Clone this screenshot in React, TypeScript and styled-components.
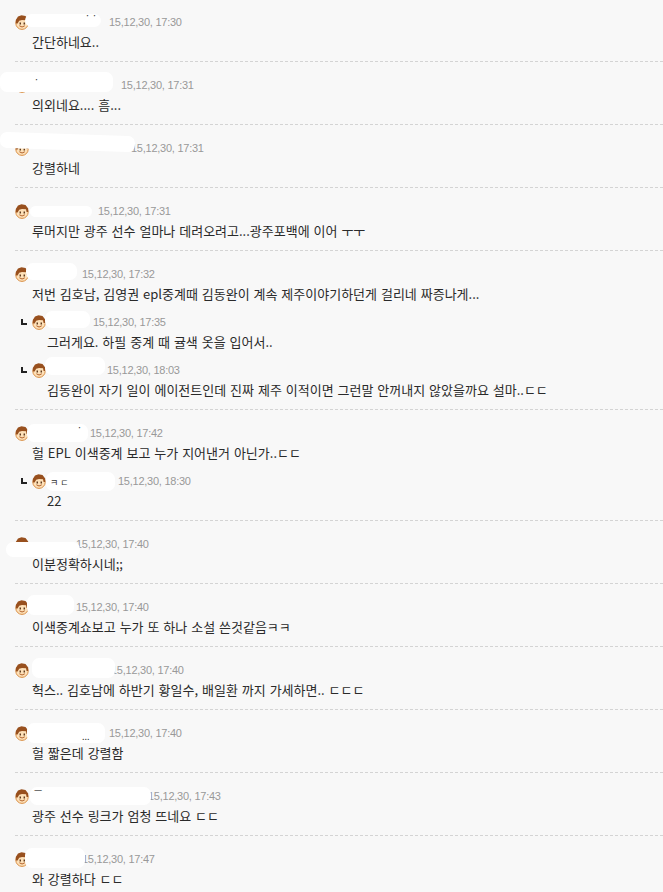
import styled, { createGlobalStyle } from "styled-components";

const GlobalStyle = createGlobalStyle`
  html, body {
    margin: 0;
    padding: 0;
    background: #f8f8f8;
  }
`;

const Page = styled.div`
  width: 663px;
  height: 892px;
  overflow: hidden;
  padding-top: 14px;
  box-sizing: border-box;
  background: #f8f8f8;
  font-family: "Noto Sans CJK KR", "Liberation Sans", sans-serif;
`;

const Thread = styled.div`
  margin-left: 15px;
  padding-bottom: 9px;
  margin-bottom: 15px;
  border-bottom: 1px dashed #d4d4d4;
`;

const Comment = styled.div<{ $reply?: boolean }>`
  height: 38px;
  margin-left: ${({ $reply }) => ($reply ? "6px" : "0")};
  margin-top: ${({ $reply }) => ($reply ? "10px" : "0")};
`;

const Header = styled.div`
  display: flex;
  align-items: center;
  height: 16px;
`;

const Mask = styled.div<{ $width: number; $back: number; $height: number; $shift: number; $tilt: number }>`
  position: relative;
  z-index: 1;
  flex: none;
  width: ${({ $width }) => $width}px;
  height: ${({ $height }) => $height}px;
  margin-left: ${({ $back }) => -$back}px;
  background: #fff;
  border-radius: 7px;
  transform: translateY(${({ $shift }) => $shift}px) rotate(${({ $tilt }) => $tilt}deg);
`;

const Residue = styled.span<{ $left: number; $top: number }>`
  position: absolute;
  left: ${({ $left }) => $left}px;
  top: ${({ $top }) => $top}px;
  font-size: 9px;
  line-height: 10px;
  color: #333;
  white-space: nowrap;
`;

const Stamp = styled.span<{ $gap: number }>`
  margin-left: ${({ $gap }) => $gap}px;
  font-family: "Liberation Sans", sans-serif;
  font-size: 11px;
  letter-spacing: -0.25px;
  color: #999;
  white-space: nowrap;
`;

const Body = styled.div<{ $reply?: boolean }>`
  margin: 4px 0 0 ${({ $reply }) => ($reply ? "26px" : "17px")};
  font-size: 13px;
  word-spacing: 1px;
  line-height: 16px;
  color: #2a2a2a;
  white-space: nowrap;
`;

const ElbowMark = styled.span`
  flex: none;
  width: 6px;
  height: 6px;
  margin-right: 5px;
  border-left: 2px solid #222;
  border-bottom: 2px solid #222;
  box-sizing: border-box;
`;

function Avatar() {
  return (
    <svg width="14" height="15" viewBox="0 0 14 15" style={{ flex: "none" }}>
      <ellipse cx="7" cy="8.2" rx="6.2" ry="6.2" fill="#fde0b8" stroke="#d98f45" strokeWidth="1" />
      <path d="M0.8 8.5 L0.8 5 L3 1.5 L6.5 0.3 L10.5 1 L13.2 4.5 L13.2 8 L11.6 8 L11 5.2 L7 5 L4.2 5.8 L2.6 8.5 Z" fill="#98501e" />
      <rect x="4.6" y="7.5" width="1.3" height="2" fill="#4e2a0e" />
      <rect x="8.6" y="7.5" width="1.3" height="2" fill="#4e2a0e" />
      <path d="M4.4 10.8 Q7 13.2 9.8 10.8" stroke="#b0602a" strokeWidth="1" fill="none" />
    </svg>
  );
}

interface Item {
  mask: number;
  back: number;
  gap: number;
  height: number;
  shift?: number;
  tilt?: number;
  residue?: { text: string; left: number; top: number };
  date: string;
  text: string;
  replies?: Item[];
}

const items: Item[] = [
  { mask: 76, back: 4, gap: 8, height: 13, shift: -2, residue: { text: "· ·", left: 60, top: -3 }, date: "15,12,30, 17:30", text: "간단하네요.." },
  { mask: 113, back: 29, gap: 8, height: 20, shift: -3, residue: { text: "·", left: 34, top: 3 }, date: "15,12,30, 17:31", text: "의외네요.... 흠..." },
  { mask: 135, back: 29, gap: -4, height: 16, shift: -6, tilt: 2, date: "15,12,30, 17:31", text: "강렬하네" },
  { mask: 62, back: -1, gap: 6, height: 11, date: "15,12,30, 17:31", text: "루머지만 광주 선수 얼마나 데려오려고...광주포백에 이어 ㅜㅜ" },
  {
    mask: 51,
    back: 3,
    gap: 5,
    height: 17,
    shift: -3,
    date: "15,12,30, 17:32",
    text: "저번 김호남, 김영권 epl중계때 김동완이 계속 제주이야기하던게 걸리네 짜증나게...",
    replies: [
      { mask: 45, back: 1, gap: 3, height: 17, shift: -3, date: "15,12,30, 17:35", text: "그러게요. 하필 중계 때 귤색 옷을 입어서.." },
      { mask: 60, back: 1, gap: 2, height: 18, shift: -4, date: "15,12,30, 18:03", text: "김동완이 자기 일이 에이전트인데 진짜 제주 이적이면 그런말 안꺼내지 않았을까요 설마..ㄷㄷ" },
    ],
  },
  {
    mask: 61,
    back: 2,
    gap: 2,
    height: 18,
    shift: 0,
    residue: { text: "·", left: 50, top: -1 },
    date: "15,12,30, 17:42",
    text: "헐 EPL 이색중계 보고 누가 지어낸거 아닌가..ㄷㄷ",
    replies: [
      { mask: 69, back: 0, gap: 3, height: 19, residue: { text: "ㅋ ㄷ", left: 4, top: 6 }, date: "15,12,30, 18:30", text: "22" },
    ],
  },
  { mask: 74, back: 23, gap: -4, height: 15, shift: 5, date: "15,12,30, 17:40", text: "이분정확하시네;;" },
  { mask: 47, back: 2, gap: 2, height: 20, shift: -2, date: "15,12,30, 17:40", text: "이색중계쇼보고 누가 또 하나 소설 쓴것같음ㅋㅋ" },
  { mask: 83, back: -3, gap: -4, height: 20, shift: -2, date: "15,12,30, 17:40", text: "헉스.. 김호남에 하반기 황일수, 배일환 까지 가세하면.. ㄷㄷㄷ" },
  { mask: 78, back: 2, gap: 4, height: 20, shift: 0, residue: { text: "...", left: 55, top: 9 }, date: "15,12,30, 17:40", text: "헐 짧은데 강렬함" },
  { mask: 121, back: -1, gap: -3, height: 18, residue: { text: "ㅡ", left: 4, top: -1 }, date: "15,12,30, 17:43", text: "광주 선수 링크가 엄청 뜨네요 ㄷㄷ" },
  { mask: 60, back: 4, gap: -3, height: 20, shift: -1, date: "15,12,30, 17:47", text: "와 강렬하다 ㄷㄷ" },
];

function Head({ item }: { item: Item }) {
  return (
    <>
      <Avatar />
      <Mask
        $width={item.mask}
        $back={item.back}
        $height={item.height}
        $shift={item.shift ?? 0}
        $tilt={item.tilt ?? 0}
      >
        {item.residue && (
          <Residue $left={item.residue.left} $top={item.residue.top}>
            {item.residue.text}
          </Residue>
        )}
      </Mask>
      <Stamp $gap={item.gap}>{item.date}</Stamp>
    </>
  );
}

export default function App() {
  return (
    <Page>
      <GlobalStyle />
      {items.map((item) => (
        <Thread key={item.date + item.text}>
          <Comment>
            <Header>
              <Head item={item} />
            </Header>
            <Body>{item.text}</Body>
          </Comment>
          {item.replies?.map((reply) => (
            <Comment $reply key={reply.date}>
              <Header>
                <ElbowMark />
                <Head item={reply} />
              </Header>
              <Body $reply>{reply.text}</Body>
            </Comment>
          ))}
        </Thread>
      ))}
    </Page>
  );
}
